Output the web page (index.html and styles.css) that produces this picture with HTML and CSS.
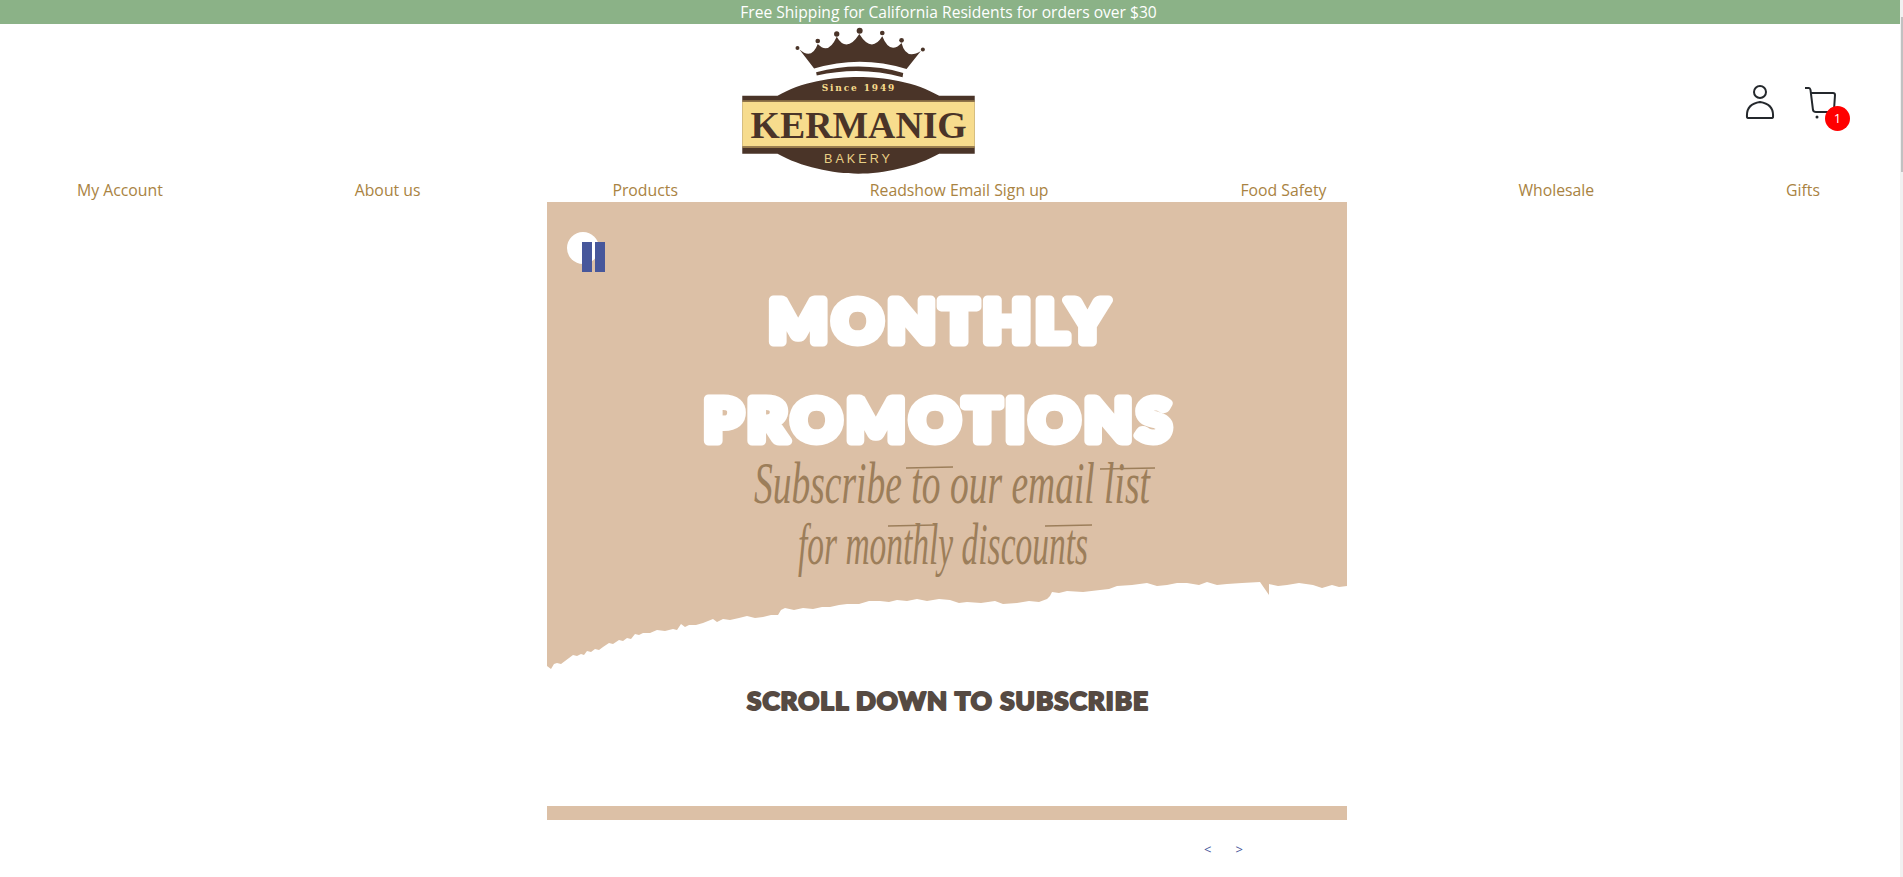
FILE: index.html
```html
<!DOCTYPE html>
<html lang="en">
<head>
<meta charset="utf-8">
<title>Kermanig Bakery</title>
<link rel="stylesheet" href="styles.css">
</head>
<body>
<div class="announce">Free Shipping for California Residents for orders over $30</div>
<header class="masthead">
  <a class="logo" href="#">
    <svg class="logo-svg" viewBox="126 80 699 445" width="233" height="148">
      <g fill="#4a3428">
        <path d="M298 148 Q335 180 353 131 Q385 165 410 109 Q440 160 478 101 Q515 160 547 108 Q570 165 605 128 Q618 180 663 152 L620 206 Q480 163 342 205 Z"/>
        <circle cx="292" cy="143" r="6"/><circle cx="353" cy="122" r="7"/><circle cx="410" cy="101" r="8"/><circle cx="479" cy="91" r="9"/><circle cx="547" cy="98" r="7"/><circle cx="605" cy="120" r="7"/><circle cx="669" cy="148" r="6"/>
        <path d="M348 216 Q480 181 610 218 L608 231 Q480 196 350 226 Z"/>
        <path d="M126 287 H232 C300 245 400 230 475 230 C550 230 650 245 718 287 H825 V461 H718 C650 500 550 521 475 521 C400 521 300 500 232 461 H126 Z"/>
      </g>
      <rect x="126" y="305" width="699" height="134" fill="#f7dc8d"/>
      <rect x="126" y="301" width="699" height="3" fill="#b8975a"/>
      <rect x="126" y="440" width="699" height="3" fill="#b8975a"/>
      <text class="logo-since" x="474" y="272" text-anchor="middle" textLength="218">Since 1949</text>
      <text class="logo-name" x="476" y="413" text-anchor="middle" textLength="650" lengthAdjust="spacingAndGlyphs">KERMANIG</text>
      <text class="logo-bakery" x="471" y="490" text-anchor="middle" textLength="198">BAKERY</text>
    </svg>
  </a>
  <div class="tools">
    <svg class="icon-user" viewBox="0 0 30 36" width="30" height="36" fill="none" stroke="#24282c" stroke-width="2">
      <circle cx="15" cy="8" r="6"/>
      <path d="M2 33 Q1 20 15 18 Q29 20 28 33 Q28 34 26 34 H4 Q2 34 2 33 Z"/>
    </svg>
    <div class="cart">
      <svg viewBox="0 0 32 34" width="32" height="34" fill="none" stroke="#24282c" stroke-width="2">
        <path d="M1 2 H5 Q6 2 6.500 4 L9 24 Q9.500 26 12 26 H28 Q30 26 30 24 L31 9 Q31 7 29 7 H7"/>
        <circle cx="13" cy="31" r="1.500" fill="#24282c" stroke="none"/>
      </svg>
      <span class="badge">1</span>
    </div>
  </div>
</header>
<nav class="nav">
  <a href="#">My Account</a>
  <a href="#">About us</a>
  <a href="#">Products</a>
  <a href="#">Readshow Email Sign up</a>
  <a href="#">Food Safety</a>
  <a href="#">Wholesale</a>
  <a href="#">Gifts</a>
</nav>
<main class="slider">
  <div class="slide">
    <svg class="art" viewBox="0 0 800 618" width="800" height="618">
      <rect width="800" height="618" fill="#dcc0a6"/>
      <path fill="#fff" d="M0 464 L4 467 L7 462 L10 461 L14 462 L18 459 L26 453 L30 454 L34 452 L37 453 L40 449 L44 450 L48 447 L52 448 L56 445 L62 441 L66 442 L72 438 L76 439 L80 436 L84 437 L88 432 L92 433 L96 431 L103 431 L110 428 L118 429 L126 427 L130 428 L134 422 L138 425 L142 423 L149 423 L156 421 L161 419 L166 417 L170 420 L176 417 L183 418 L192 416 L200 414 L208 416 L216 415 L224 413 L231 413 L234 408 L238 406 L247 408 L256 406 L266 407 L275 405 L283 405 L292 403 L300 402 L312 402 L322 399 L333 399 L342 400 L350 398 L360 399 L370 397 L380 399 L392 397 L403 398 L412 401 L420 400 L434 401 L448 399 L456 402 L470 401 L482 399 L492 400 L500 397 L503 394 L505 390 L512 391 L520 389 L536 390 L553 388 L562 387 L570 384 L585 383 L600 381 L610 384 L620 383 L630 381 L640 381 L652 383 L660 380 L670 383 L680 382 L695 381 L713 380 L722 393 L722 382 L731 384 L740 383 L752 381 L766 383 L775 386 L785 383 L792 385 L800 384 V604 H0 Z"/>
      <rect y="604" width="800" height="14" fill="#dcc0a6"/>
      <text class="art-title" x="394" y="140" text-anchor="middle" textLength="344" lengthAdjust="spacingAndGlyphs">MONTHLY</text>
      <text class="art-title" x="393" y="239" text-anchor="middle" textLength="472" lengthAdjust="spacingAndGlyphs">PROMOTIONS</text>
      <text class="art-script" x="405" y="0" text-anchor="middle" transform="translate(0 301) scale(1 1.5)" textLength="396" lengthAdjust="spacingAndGlyphs">Subscribe to our email list</text>
      <text class="art-script" x="396" y="0" text-anchor="middle" transform="translate(0 362) scale(1 1.5)" textLength="290" lengthAdjust="spacingAndGlyphs">for monthly discounts</text>
      <g class="art-flourish">
        <line x1="359" y1="266" x2="406" y2="265"/>
        <line x1="553" y1="267" x2="608" y2="266"/>
        <line x1="341" y1="324" x2="388" y2="323"/>
        <line x1="498" y1="324" x2="545" y2="323"/>
      </g>
      <text class="art-scroll" x="401" y="508" text-anchor="middle" textLength="402" lengthAdjust="spacingAndGlyphs">SCROLL DOWN TO SUBSCRIBE</text>
    </svg>
    <button class="pause" type="button" aria-label="Pause"><span></span><span></span></button>
  </div>
  <div class="arrows"><span>&lt;</span><span>&gt;</span></div>
</main>
<div class="scrollbar"><div class="thumb"></div></div>
</body>
</html>
```

FILE: styles.css
```css
* { box-sizing: border-box; }
html, body { margin: 0; height: 100%; overflow: hidden; }
body { background: #fff; font-family: "Open Sans", "Noto Sans", sans-serif; padding-right: 3px; position: relative; }
.announce { height: 24px; background: #8bb287; color: #fff; font-size: 15.6px; line-height: 24px; text-align: center; padding-right: 3px; }
.masthead { height: 148px; position: relative; display: flex; justify-content: center; }
.logo { display: block; margin-right: 183px; margin-top: 3px; height: 148px; }
.logo-svg { display: block; }
.logo-since { font: bold 27px "DejaVu Serif", serif; fill: #f7dc8d; }
.logo-name { font: bold 114px "Liberation Serif", serif; fill: #4a3428; }
.logo-bakery { font: 38px "Liberation Sans", sans-serif; fill: #e9cf85; }
.tools { position: absolute; top: 60px; right: 64px; display: flex; align-items: flex-start; gap: 29px; }
.cart { position: relative; padding-top: 2px; }
.badge { position: absolute; left: 21px; top: 22px; width: 25px; height: 25px; border-radius: 50%; background: #f00; color: #fff; font-size: 13px; line-height: 25px; text-align: center; }
.nav { display: flex; justify-content: space-between; padding: 0 80px 0 77px; height: 30px; line-height: 36px; font-size: 15.8px; }
.nav a { color: #a98342; text-decoration: none; }
.slider { width: 800px; margin: 0 0 0 547px; }
.slide { position: relative; height: 618px; }
.art { display: block; }
.art-title { font: 900 58px Lato, sans-serif; fill: #fff; stroke: #fff; stroke-width: 9px; stroke-linejoin: round; letter-spacing: 5px; }
.art-script { font: italic 40px "Liberation Serif", serif; fill: #9c7e5a; }
.art-flourish line { stroke: #9c7e5a; stroke-width: 1.500px; }
.art-scroll { font: 900 24px Lato, sans-serif; fill: #564a42; stroke: #564a42; stroke-width: 2px; stroke-linejoin: round; letter-spacing: 1px; }
.pause { position: absolute; left: 20px; top: 30px; width: 32px; height: 32px; border: 0; padding: 0; border-radius: 50%; background: #fff; }
.pause span { position: absolute; top: 10px; width: 10px; height: 30px; background: #47579b; }
.pause span:first-child { left: 15px; }
.pause span:last-child { left: 28px; }
.arrows { display: flex; gap: 24px; margin: 20px 0 0 657px; font-size: 13px; color: #47579b; }
.scrollbar { position: absolute; top: 0; right: 0; width: 3px; height: 100%; background: #f1f1f1; }
.thumb { margin: 17px 0 0 1px; height: 155px; background: #c1c1c1; }
```
